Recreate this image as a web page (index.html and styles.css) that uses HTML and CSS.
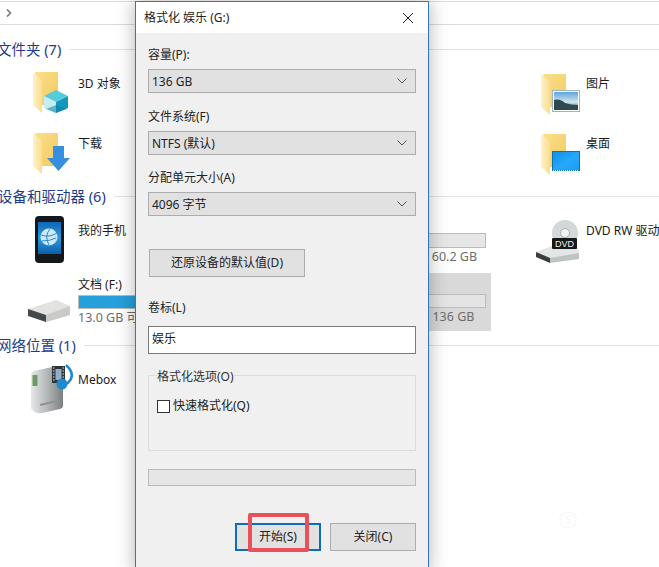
FILE: index.html
```html
<!DOCTYPE html>
<html lang="zh-CN">
<head>
<meta charset="utf-8">
<title>格式化 娱乐 (G:)</title>
<link rel="stylesheet" href="styles.css">
</head>
<body>
<svg class="defs" width="0" height="0" aria-hidden="true">
  <defs>
    <linearGradient id="fb" x1="0" y1="0" x2="1" y2="1"><stop offset="0" stop-color="#fbe08c"/><stop offset="1" stop-color="#f3c95f"/></linearGradient>
    <linearGradient id="ff" x1="0" y1="0" x2="1" y2="0"><stop offset="0" stop-color="#fff2c6"/><stop offset="1" stop-color="#f9de92"/></linearGradient>
    <linearGradient id="sky" x1="0" y1="0" x2="1" y2="1"><stop offset="0" stop-color="#0f8fe8"/><stop offset=".55" stop-color="#26a8fb"/><stop offset="1" stop-color="#1a9af2"/></linearGradient>
    <linearGradient id="nas" x1="0" y1="0" x2="1" y2="0"><stop offset="0" stop-color="#e6e8e8"/><stop offset=".5" stop-color="#b4b8b8"/><stop offset="1" stop-color="#7b7f80"/></linearGradient>
    <linearGradient id="scr" x1="0" y1="0" x2="0" y2="1"><stop offset="0" stop-color="#0d66b4"/><stop offset=".5" stop-color="#2b9be2"/><stop offset="1" stop-color="#0c5ea6"/></linearGradient>
    <linearGradient id="pic" x1="0" y1="0" x2="0" y2="1"><stop offset="0" stop-color="#5aa7d8"/><stop offset=".55" stop-color="#cfe4ee"/><stop offset="1" stop-color="#3f6f8c"/></linearGradient>
    <symbol id="folder" viewBox="0 0 25 41">
      <path d="M2 0H25V33H9z" fill="url(#fb)"/>
      <path d="M0 0L9 8V41L0 33z" fill="url(#ff)"/>
    </symbol>
  </defs>
</svg>

<main class="explorer">
  <div class="crumb"><svg width="6" height="8" viewBox="0 0 6 8"><path d="M1 .5L4.5 4L1 7.5" fill="none" stroke="#777" stroke-width="1.6"/></svg></div>

  <section class="group">
    <h2 class="group-title"><span class="cut-a">文件夹 (7)</span></h2>
    <div class="tiles">
      <div class="tile">
        <svg class="icon" viewBox="0 0 56 58">
          <use href="#folder" x="11" y="9" width="25" height="41"/>
          <path d="M34 27L46 33L34 39L22 33z" fill="#55cbdc"/>
          <path d="M22 33L34 39V50L22 45z" fill="#c6eef2"/>
          <path d="M46 33L34 39V50L46 45z" fill="#1398bd"/>
          <path d="M24 46L34 42L45 46L34 50z" fill="#0f7fa5" opacity=".55"/>
        </svg>
        <div class="name-top">3D 对象</div>
      </div>
      <div class="tile hidden-tile"></div>
      <div class="tile">
        <svg class="icon" viewBox="0 0 56 58">
          <use href="#folder" x="11" y="11" width="25" height="41"/>
          <rect x="22.500" y="27.500" width="27" height="21" fill="#fff" stroke="#9db2c9"/>
          <rect x="24" y="29" width="24" height="18" fill="url(#pic)"/>
          <path d="M24 37Q30 35 35 40Q41 42 48 42V47H24z" fill="#2f4a4c"/>
        </svg>
        <div class="name-top">图片</div>
      </div>
      <div class="tile">
        <svg class="icon" viewBox="0 0 56 58">
          <use href="#folder" x="11" y="10" width="25" height="41"/>
          <path d="M31 23H42V35H48L36.500 48L25 35H31z" fill="#3590e2"/>
        </svg>
        <div class="name-top">下载</div>
      </div>
      <div class="tile hidden-tile"></div>
      <div class="tile">
        <svg class="icon" viewBox="0 0 56 58">
          <use href="#folder" x="11" y="11" width="25" height="41"/>
          <rect x="22.500" y="28.500" width="27" height="19" fill="url(#sky)" stroke="#0d73ad"/>
          <path d="M23 47.500H49" stroke="#cfeeff" stroke-dasharray="1 1"/>
        </svg>
        <div class="name-top">桌面</div>
      </div>
    </div>
  </section>

  <section class="group">
    <h2 class="group-title"><span class="cut-b">设备和驱动器 (6)</span></h2>
    <div class="tiles tiles-wide">
      <div class="tile">
        <svg class="icon" viewBox="0 0 56 58">
          <rect x="13" y="6" width="29" height="47" rx="4" fill="#14181c"/>
          <rect x="16" y="12" width="23" height="32" fill="url(#scr)"/>
          <circle cx="27" cy="27" r="8.500" fill="#cfe9f8"/>
          <path d="M19 25Q27 28 35 23M20 31Q28 31 34 28M28 19Q22 26 27 35" fill="none" stroke="#2b88cf"/>
        </svg>
        <div class="name-top">我的手机</div>
      </div>
      <div class="tile">
        <div class="name-drive name-mid">
          <div>本地磁盘 软件 (E:)</div>
          <div class="bar bar-low"><span class="fill fill-b"></span></div>
          <div class="size size-b">38.5 GB 可用，共 60.2 GB</div>
        </div>
      </div>
      <div class="tile">
        <svg class="icon" viewBox="0 0 56 58">
          <circle cx="35" cy="23" r="13" fill="#d3d8da"/>
          <circle cx="35" cy="23" r="4.500" fill="#f2f4f4" stroke="#a9b0b3"/>
          <path d="M6 42L22 36L48 38L49 44L20 49z" fill="#e4e6e6"/>
          <path d="M6 42L20 48V53L6 47z" fill="#3a3e3f"/>
          <path d="M20 48L49 43V49L20 53z" fill="#bfc3c3"/>
          <rect x="22" y="28" width="25" height="11" rx="1" fill="#16181a"/>
          <text class="dvd" x="34.500" y="37" text-anchor="middle">DVD</text>
        </svg>
        <div class="name-top">DVD RW 驱动器 (H:)</div>
      </div>
      <div class="tile">
        <svg class="icon" viewBox="0 0 56 58">
          <path d="M6 36L34 27L48 33V42L24 49z" fill="#e2e3e1"/>
          <path d="M6 36L24 42V49L6 43z" fill="#45494a"/>
          <path d="M24 42L48 33V42L24 49z" fill="#c9cbc9"/>
        </svg>
        <div class="name-drive">
          <div>文档 (F:)</div>
          <div class="bar"><span class="fill fill-a"></span></div>
          <div class="size">13.0 GB 可用，共 120 GB</div>
        </div>
      </div>
      <div class="tile selected">
        <div class="name-drive name-mid">
          <div>娱乐 (G:)</div>
          <div class="bar bar-sel"><span class="fill fill-c"></span></div>
          <div class="size size-c">136 GB 可用，共 136 GB</div>
        </div>
      </div>
    </div>
  </section>

  <section class="group">
    <h2 class="group-title"><span class="cut-c">网络位置 (1)</span></h2>
    <div class="tiles">
      <div class="tile">
        <svg class="icon" viewBox="0 0 56 58">
          <path d="M9 15Q9 13 12 12L30 8H38Q41 8 41 11V47Q41 49 38 50L20 54Q16 55 13 53L10 51Q9 50 9 48z" fill="url(#nas)"/>
          <rect x="10.500" y="16" width="5" height="11" fill="#6f9a62"/>
          <path d="M18 46L35 42" stroke="#8e9292" stroke-width="2"/>
          <rect x="30" y="7" width="13" height="17" fill="#2f3438"/>
          <path d="M31 9H32.500M31 12H32.500M31 15H32.500M31 18H32.500M31 21H32.500M40.500 9H42M40.500 12H42M40.500 15H42M40.500 18H42M40.500 21H42" stroke="#dfe3e6"/>
          <rect x="33.500" y="10" width="6" height="11" fill="#8fb0c8"/>
          <path d="M44 6Q52 13 49 20L45 25" fill="none" stroke="#1f8ad0" stroke-width="2.500"/>
          <circle cx="40" cy="25" r="5.500" fill="#1f8ad0"/>
        </svg>
        <div class="name-top">Mebox</div>
      </div>
    </div>
  </section>
</main>

<div class="mark">S</div>

<div class="dialog" role="dialog" aria-label="格式化 娱乐 (G:)">
  <header class="titlebar">
    <span>格式化 娱乐 (G:)</span>
    <svg class="close" width="10" height="10" viewBox="0 0 10 10"><path d="M0 0L10 10M10 0L0 10" stroke="#222" stroke-width="1"/></svg>
  </header>
  <div class="body">
    <div class="label">容量(P):</div>
    <div class="combo">136 GB<svg class="chev" width="10" height="6" viewBox="0 0 10 6"><path d="M.5 .5L5 5L9.500 .5" fill="none" stroke="#555"/></svg></div>
    <div class="label label-2">文件系统(F)</div>
    <div class="combo">NTFS (默认)<svg class="chev" width="10" height="6" viewBox="0 0 10 6"><path d="M.5 .5L5 5L9.500 .5" fill="none" stroke="#555"/></svg></div>
    <div class="label label-3">分配单元大小(A)</div>
    <div class="combo">4096 字节<svg class="chev" width="10" height="6" viewBox="0 0 10 6"><path d="M.5 .5L5 5L9.500 .5" fill="none" stroke="#555"/></svg></div>
    <button class="btn restore" type="button">还原设备的默认值(D)</button>
    <div class="label label-4">卷标(L)</div>
    <div class="input">娱乐</div>
    <fieldset class="options">
      <legend>格式化选项(O)</legend>
      <label class="check"><span class="box"></span>快速格式化(Q)</label>
    </fieldset>
    <div class="progress"></div>
    <div class="actions">
      <button class="btn action primary" type="button">开始(S)</button>
      <button class="btn action" type="button">关闭(C)</button>
      <span class="callout"></span>
    </div>
  </div>
</div>
</body>
</html>
```

FILE: styles.css
```css
* { box-sizing: border-box; }
html, body { margin: 0; height: 100%; }
body {
  position: relative;
  width: 659px;
  height: 567px;
  overflow: hidden;
  background: #fff;
  color: #1a1a1a;
  font: 12px/18px "Noto Sans", "Noto Sans CJK SC", sans-serif;
}
.defs { position: absolute; }

.explorer { height: 567px; }
.crumb {
  height: 24px;
  margin-top: 1px;
  padding-left: 6px;
  display: flex;
  align-items: center;
  border-top: 1px solid #dcdcdc;
  border-bottom: 1px solid #dcdcdc;
}
.group { margin: 0; }
.group-title {
  margin: 0;
  height: 20px;
  padding-bottom: 2px;
  display: flex;
  align-items: center;
  font-size: 14.5px;
  font-weight: 400;
  line-height: 18px;
  color: #1e3a8a;
  white-space: nowrap;
}
.group-title::after { content: ""; flex: 1; height: 1px; background: #e2e2e2; margin-left: 8px; }
.cut-a { margin-left: -3px; }
.cut-b { margin-left: -2px; }
.cut-c { margin-left: -3px; }
.group:nth-of-type(1) { padding-top: 15px; }
.group:nth-of-type(2) { padding-top: 6px; }
.group:nth-of-type(3) { padding-top: 5px; }

.tiles {
  display: grid;
  grid-template-columns: repeat(3, 215px);
  column-gap: 39px;
  row-gap: 2px;
  margin: 3px 0 0 22px;
}
.tiles-wide { row-gap: 5px; }
.tile {
  display: flex;
  height: 58px;
  white-space: nowrap;
}
.selected { background: #d9d9d9; }
.icon { width: 56px; height: 58px; flex: none; }
.name-top { padding-top: 12px; }
.name-drive { padding-top: 3px; flex: 1; }
.name-mid { padding-left: 56px; }
.bar {
  width: 154px;
  height: 14px;
  margin-top: 1px;
  background: #e6e6e6;
  border: 1px solid #bcbcbc;
}
.bar-low { margin-top: 2px; height: 15px; }
.bar-sel { margin-top: 0; background: #e4e4e4; }
.fill { display: block; height: 100%; }
.fill-a { width: 90%; background: #26a0da; }
.fill-b { width: 30%; background: #26a0da; }
.fill-c { width: 0; }
.size { color: #6d6d6d; font-size: 12.5px; }
.size-b { margin-left: -2px; }
.size-c { margin-left: 2px; }
.dvd { font: 9px "Liberation Sans", sans-serif; fill: #f2f2f2; }

.mark {
  position: absolute;
  left: 559px;
  top: 511px;
  width: 18px;
  height: 18px;
  border: 2px solid #f9f9f9;
  border-radius: 50%;
  color: #f9f9f9;
  font-size: 12px;
  line-height: 14px;
  font-weight: 700;
  text-align: center;
}

.dialog {
  position: absolute;
  left: 135px;
  top: 1px;
  width: 294px;
  height: 572px;
  background: #f0f0f0;
  border: 1px solid #3178b4;
  box-shadow: 0 0 18px rgba(0, 0, 0, .3);
}
.titlebar {
  height: 31px;
  padding: 0 15px 0 8px;
  display: flex;
  align-items: center;
  justify-content: space-between;
  background: #fff;
  color: #222;
}
.body { padding: 12px 12px 0 12px; }
.label { height: 18px; line-height: 20px; color: #222; }
.label-2 { margin-top: 14px; }
.label-3 { margin-top: 13px; }
.label-4 { margin-top: 21px; }
.combo {
  height: 24px;
  margin-top: 6px;
  padding: 2px 8px 0 3px;
  display: flex;
  align-items: center;
  justify-content: space-between;
  background: #e1e1e1;
  border: 1px solid #adadad;
  color: #222;
}
.chev { margin-top: -2px; }
.btn {
  display: block;
  padding: 0;
  background: #e1e1e1;
  border: 1px solid #adadad;
  color: #222;
  font: inherit;
}
.restore { width: 156px; height: 28px; margin: 33px 0 0 1px; }
.input {
  height: 28px;
  margin-top: 10px;
  padding: 0 3px 2px;
  display: flex;
  align-items: center;
  background: #fff;
  border: 1px solid #7a7a7a;
}
.options {
  position: relative;
  height: 76px;
  margin: 21px 0 0;
  padding: 15px 0 0 8px;
  border: 1px solid #dcdcdc;
  min-width: 0;
}
.options legend {
  position: absolute;
  left: 8px;
  top: -8px;
  padding: 0;
  background: #f0f0f0;
  color: #333;
}
.check { display: flex; align-items: center; gap: 3px; margin-top: 6px; color: #222; }
.box { width: 13px; height: 13px; background: #fff; border: 1px solid #333; }
.progress {
  height: 17px;
  margin-top: 18px;
  background: #e6e6e6;
  border: 1px solid #bcbcbc;
}
.actions {
  position: relative;
  display: flex;
  justify-content: flex-end;
  gap: 9px;
  margin-top: 37px;
}
.action { width: 86px; height: 28px; }
.primary { border: 2px solid #0f6cb8; }
.callout {
  position: absolute;
  left: 100px;
  top: -10px;
  width: 61px;
  height: 39px;
  border: 4px solid #e8505a;
  border-radius: 2px;
}
```
